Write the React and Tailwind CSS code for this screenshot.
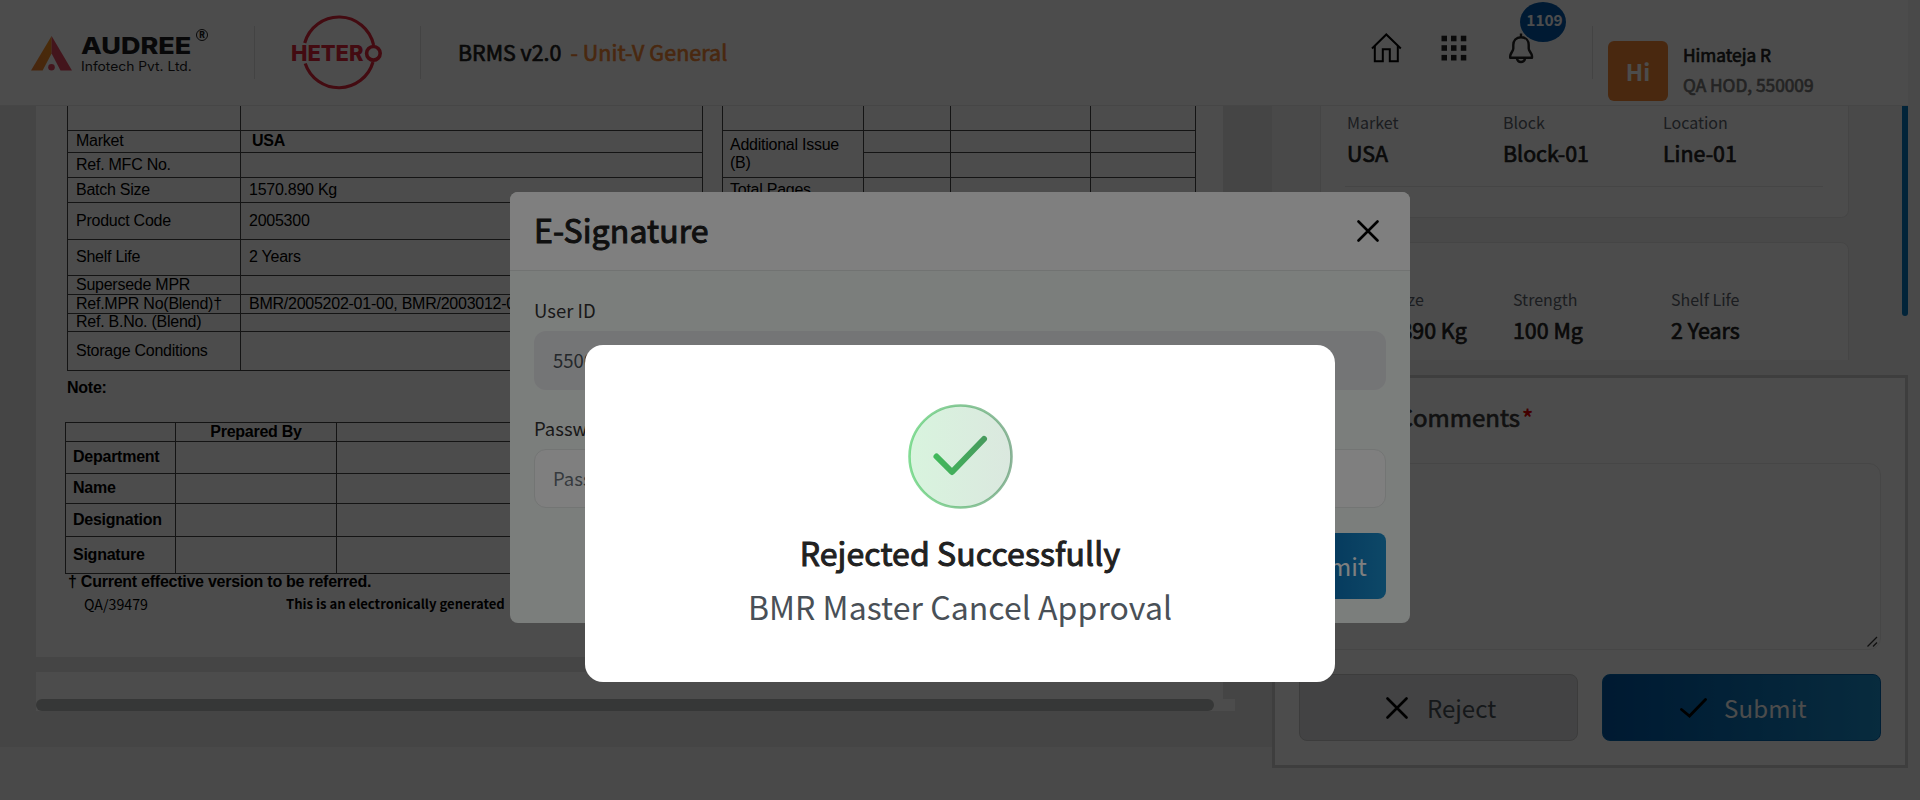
import React from "react";

const strong = "[-webkit-text-stroke:0.7px_currentColor]";

function AudreeLogo() {
  return (
    <div className="flex pt-9">
      <svg className="h-[35px] w-[41px]" viewBox="0 0 41 35">
        <defs>
          <linearGradient id="orange" x1="0" x2="1" y1="1" y2="0">
            <stop offset="0" stopColor="#ee7f33" />
            <stop offset="1" stopColor="#f7941d" />
          </linearGradient>
        </defs>
        <polygon points="20.6,0 20.6,17.5 11.6,34.6 0,34.6" fill="url(#orange)" />
        <polygon points="20.6,0 41,34.6 29.5,34.6 20.6,17.5" fill="#e2475e" />
        <circle cx="20.5" cy="31.2" r="3.3" fill="#e2475e" />
      </svg>
      <div className="flex w-[114px] flex-col pl-[9px] pt-[1px] font-['Inter',sans-serif] text-[#1d1d1f]">
        <div className="h-[18px] origin-left scale-x-[1.155] whitespace-nowrap text-[23.4px] font-extrabold leading-[18px]">AUDREE</div>
        <div className="mt-[3px] origin-left scale-x-[1.08] whitespace-nowrap text-[12.8px] leading-[18px]">Infotech Pvt. Ltd.</div>
      </div>
      <div className="-mt-[7px] ml-[10px] flex size-[12px] items-center justify-center rounded-full border-[1.5px] border-[#1d1d1f] font-['Inter',sans-serif] text-[8.5px] font-extrabold leading-none text-[#1d1d1f]">R</div>
    </div>
  );
}

function HeteroLogo() {
  return (
    <svg className="h-[78px] w-[92px]" viewBox="291 13 92 78">
      <g fill="none" stroke="#e0263a" strokeWidth="3.2">
        <path d="M304.7 43A35.5 35.5 0 0 1 373.6 45" />
        <path d="M305.2 63.5A35.5 35.5 0 0 0 373 62" />
        <circle cx="373.4" cy="53.3" r="6.8" strokeWidth="3.6" />
      </g>
      <text x="291" y="61" textLength="72.5" lengthAdjust="spacingAndGlyphs" fill="#e0263a" fontFamily="Inter, sans-serif" fontWeight="800" fontSize="21">HETER</text>
    </svg>
  );
}

function Header() {
  return (
    <header className="flex h-[106px] w-[1908px] shrink-0 border-b border-[#eaeaea] bg-white">
      <div className="w-[254px] pl-[31px]"><AudreeLogo /></div>
      <div className="mt-[26px] h-[53px] w-px bg-[#e2e2e2]" />
      <div className="w-[165px] pl-9 pt-[13px]"><HeteroLogo /></div>
      <div className="mt-[26px] h-[53px] w-px bg-[#e2e2e2]" />
      <div className="flex w-[950px] gap-[9px] pl-[37px] pt-[37px] text-[21.4px] leading-[30px]">
        <span className={`text-[#212121] ${strong}`}>BRMS v2.0</span>
        <span className={`tracking-[0.1px] text-[#f58634] ${strong}`}>- Unit-V General</span>
      </div>
      <svg className="mt-[33px] h-[30px] w-[31px]" viewBox="0 0 31 30" fill="none" stroke="#000" strokeWidth="2">
        <path d="M1 15.500L15.300 1.500L29.800 15.500" />
        <path d="M3.800 13V28.200H11.800V16.200H18.800V28.200H26.800V13" />
      </svg>
      <svg className="ml-[39px] mt-[35px] h-[27px] w-[27px]" viewBox="0 0 27 27" fill="#222">
        {[0.7, 10.2, 19.9].map((y) => [0.5, 10, 19.8].map((x) => <rect key={`${x}-${y}`} x={x} y={y} width="5.5" height="5.6" />))}
      </svg>
      <div className="relative ml-[41px] mt-[33px] h-[31px] w-[25px]">
        <svg className="h-[31px] w-[25px]" viewBox="0 0 25 31" fill="none" stroke="#222" strokeWidth="2.4" strokeLinejoin="round">
          <path d="M12 0.500V4.500M12 4.200C7 4.200 4.300 7.800 4.300 12V15.500C4.300 18 1.200 20.500 1.200 23V24.800H23V23C23 20.500 19.700 18 19.700 15.500V12C19.700 7.800 17 4.200 12 4.200Z" />
          <path d="M7.800 25C8.300 28 10 29 12 29C14 29 15.700 28 16.200 25" />
        </svg>
        <span className="absolute -top-[31px] left-[11px] flex h-[40px] w-[46px] items-center justify-center rounded-[50%] bg-[#0058ac] pb-[5px] pl-[3px] text-[15.4px] font-bold leading-none text-white">1109</span>
      </div>
      <div className="ml-[58px] mt-[26px] h-[53px] w-px bg-[#e2e2e2]" />
      <div className="ml-[15px] mt-[41px] flex h-[60px] w-[60px] items-center justify-center rounded-md bg-[#f58634] text-[23px] font-bold text-white">Hi</div>
      <div className="ml-[15px] flex flex-col pt-[42px] text-[17.3px] leading-[25px]">
        <span className={`text-[#222] ${strong}`}>Himateja R</span>
        <span className={`mt-[5px] text-[#777] ${strong}`}>QA HOD, 550009</span>
      </div>
    </header>
  );
}

const specs = [
  ["Market", "USA"],
  ["Ref. MFC No.", ""],
  ["Batch Size", "1570.890 Kg"],
  ["Product Code", "2005300"],
  ["Shelf Life", "2 Years"],
  ["Supersede MPR", ""],
  ["Ref.MPR No(Blend)†", "BMR/2005202-01-00, BMR/2003012-01"],
  ["Ref. B.No. (Blend)", ""],
  ["Storage Conditions", ""],
];

const cell = "flex items-center border-b border-r border-[#444] whitespace-nowrap pb-px";

function Document() {
  return (
    <div className="flex h-[551px] w-[1187px] shrink-0 flex-col overflow-hidden bg-white font-['Liberation_Sans',sans-serif] text-[16px] leading-[18px] tracking-[-0.25px] text-black">
      <div className="ml-[31px] flex h-[265px] shrink-0 gap-[19px]">
        <div className="grid w-[636px] grid-cols-[173px_1fr] grid-rows-[25px_22px_25px_25px_37px_36px_19px_19px_18px_39px] border-l border-[#444]">
          <div className={cell} />
          <div className={cell} />
          {specs.map(([label, value], i) => (
            <React.Fragment key={label}>
              <div className={`${cell} pl-2`}>{label}</div>
              <div className={`${cell} ${i === 0 ? "pl-[11px] font-bold" : "pl-2"}`}>{value}</div>
            </React.Fragment>
          ))}
        </div>
        <div className="grid h-[265px] w-[474px] grid-cols-[141px_87px_140px_1fr] grid-rows-[25px_22px_25px_25px] border-l border-[#444]">
          <div className={cell} /><div className={cell} /><div className={cell} /><div className={cell} />
          <div className={`${cell} row-span-2 !whitespace-normal pl-[7px]`}>Additional Issue (B)</div>
          <div className={cell} /><div className={cell} /><div className={cell} />
          <div className={cell} /><div className={cell} /><div className={cell} />
          <div className={`${cell} pl-[7px]`}>Total Pages</div>
          <div className={cell} /><div className={cell} /><div className={cell} />
        </div>
      </div>
      <div className="ml-[31px] mt-[8px] h-[43px] font-bold">Note:</div>
      <div className="ml-[29px] grid w-[1131px] shrink-0 grid-cols-[110px_161px_1fr] grid-rows-[19px_32px_30px_33px_37px] border-l border-t border-[#444] font-bold">
        <div className={cell} />
        <div className={`${cell} justify-center`}>Prepared By</div>
        <div className={cell} />
        {["Department", "Name", "Designation", "Signature"].map((r) => (
          <React.Fragment key={r}>
            <div className={`${cell} pl-[7px]`}>{r}</div>
            <div className={cell} />
            <div className={cell} />
          </React.Fragment>
        ))}
      </div>
      <div className="-mt-px ml-8 font-bold">† Current effective version to be referred.</div>
      <div className="mt-1 flex pl-12 font-['Noto_Sans_CJK_SC',sans-serif] tracking-normal">
        <span className="w-[202px] text-[14.2px]">QA/39479</span>
        <span className="text-[13.1px] font-bold">This is an electronically generated</span>
      </div>
    </div>
  );
}

function Fact({ label, value, className }) {
  return (
    <div className={`flex flex-col ${className}`}>
      <span className="text-[16px] leading-6 text-[#5b626b]">{label}</span>
      <span className={`mt-1 text-[21.4px] leading-[30px] text-[#222] ${strong}`}>{value}</span>
    </div>
  );
}

function CrossIcon() {
  return (
    <svg className="size-[22px]" viewBox="0 0 22 22" stroke="#000" strokeWidth="2.6" strokeLinecap="round"><path d="M1.500 1.500L20.500 20.500M20.500 1.500L1.500 20.500" /></svg>
  );
}

function SidePanel() {
  return (
    <aside className="flex w-[636px] flex-col">
      <div className="flex h-[269px] justify-between overflow-hidden">
        <div className="ml-12 flex h-[254px] w-[529px] flex-col overflow-hidden">
          <div className="h-[112px] shrink-0 rounded-b-lg border border-t-0 border-[#e8e8e8] bg-white pt-1">
            <div className="flex pl-[26px]">
              <Fact className="w-[156px]" label="Market" value="USA" />
              <Fact className="w-[160px]" label="Block" value="Block-01" />
              <Fact label="Location" value="Line-01" />
            </div>
            <div className="ml-6 mt-[18px] h-px w-[478px] bg-[#e6e6e6]" />
          </div>
          <div className="mt-6 h-[140px] shrink-0 rounded-t-lg border border-[#e8e8e8] bg-white pt-11">
            <div className="flex pl-[26px]">
              <Fact className="w-[166px]" label="Batch Size" value="1570.890 Kg" />
              <Fact className="w-[158px]" label="Strength" value="100 Mg" />
              <Fact label="Shelf Life" value="2 Years" />
            </div>
          </div>
        </div>
        <div className="h-[210px] w-[6px] rounded-b bg-[#0879c0]" />
      </div>
      <div className="flex h-[393px] flex-col border-[3px] border-[#cfcfcf] bg-white px-6 pt-6">
        <div className="flex text-[24px] leading-[30px] text-[#3a3a3a]">
          <span className={`w-[221px] whitespace-nowrap text-right ${strong}`}>Reject Comments</span>
          <span className="ml-[2px] -mt-px text-[22px] font-bold text-[#e00000]">*</span>
        </div>
        <div className="mt-[31px] flex h-[187px] items-end justify-end rounded-xl border border-[#e9e9e9] p-[2px]">
          <svg className="size-[11px]" viewBox="0 0 11 11" stroke="#333" strokeWidth="1.300"><path d="M0.500 10.500L10 1M6 10.500L10 6.500" /></svg>
        </div>
        <div className="mt-6 flex justify-between">
          <button className="flex h-[67px] w-[279px] items-center gap-[19px] rounded-lg border border-[#c9c9c9] bg-[#dfe0e4] pl-[86px] text-[24px] text-[#495057]"><CrossIcon />Reject</button>
          <button className="flex h-[67px] w-[279px] items-center gap-[17px] rounded-lg border border-[#0067b0] bg-gradient-to-r from-[#0057a6] to-[#1b90cf] pl-[77px] text-[24px] tracking-[0.2px] text-white">
            <svg className="h-[20px] w-[27px]" viewBox="0 0 27 20" fill="none" stroke="#000" strokeWidth="2.8" strokeLinecap="round"><path d="M1.500 11.500L9.500 18L25.500 1.500" /></svg>
            Submit
          </button>
        </div>
      </div>
    </aside>
  );
}

function SignatureDialog() {
  return (
    <div className="absolute inset-0 flex items-start justify-center bg-black/40 pt-48">
      <div className="flex h-[431px] w-[900px] flex-col overflow-hidden rounded-lg bg-[#f7fcf9]">
        <div className="flex h-[79px] items-center justify-between border-b border-[#e3e6e5] bg-white pl-[24px] pr-[31px]">
          <h2 className="-mt-1 text-[32px] leading-[44px] tracking-[0.1px] text-[#212121] [-webkit-text-stroke:1px_currentColor]">E-Signature</h2>
          <CrossIcon />
        </div>
        <div className="flex flex-col px-6 pt-[27px] text-[18.5px] leading-6 text-[#333]">
          <label>User ID</label>
          <div className="mt-[9px] flex h-[59px] items-center rounded-xl bg-[#e9eaed] pb-[2px] pl-[19px] text-[#495057]">550009</div>
          <label className="mt-[26px]">Password</label>
          <div className="mt-[9px] flex h-[59px] items-center rounded-xl border border-[#e6eae8] bg-white pb-[2px] pl-[18px] text-[#6c757d]">Password</div>
          <button className="mt-[25px] flex h-[66px] w-[120px] items-center justify-center self-end rounded-lg bg-gradient-to-r from-[#0057a6] to-[#1b90cf] pb-px text-[24px] text-white">Submit</button>
        </div>
      </div>
    </div>
  );
}

function SuccessAlert() {
  return (
    <div className="absolute inset-0 flex items-start justify-center bg-black/50 pt-[345px]">
      <div className="flex h-[337px] w-[750px] flex-col items-center rounded-[18px] bg-white pt-[59px]">
        <svg className="size-[105px]" viewBox="0 0 105 105" fill="none">
          <defs>
            <linearGradient id="ok" x1="0" x2="105" y1="0" y2="0" gradientUnits="userSpaceOnUse">
              <stop offset="0" stopColor="#3ec95a" />
              <stop offset="1" stopColor="#4a8a5e" />
            </linearGradient>
          </defs>
          <circle cx="52.5" cy="52.5" r="51" fill="url(#ok)" fillOpacity="0.200" stroke="url(#ok)" strokeOpacity="0.620" strokeWidth="2.600" />
          <path d="M28.500 52.500L44 68L76 35" stroke="url(#ok)" strokeWidth="6" strokeLinecap="round" strokeLinejoin="round" />
        </svg>
        <h2 className="mt-[23px] text-[32px] leading-10 tracking-[0.1px] text-[#212121] [-webkit-text-stroke:1px_currentColor]">Rejected Successfully</h2>
        <p className="mt-[14px] text-[32px] leading-10 tracking-[0.06px] text-[#495057]">BMR Master Cancel Approval</p>
      </div>
    </div>
  );
}

export default function App() {
  return (
    <div className="relative flex h-[800px] w-[1920px] flex-col overflow-hidden bg-[#f4f4f4] font-['Noto_Sans_CJK_SC',sans-serif]">
      <Header />
      <main className="flex">
        <section className="flex h-[641px] w-[1272px] shrink-0 flex-col bg-[#e6e6e6] pl-9">
          <Document />
          <div className="mt-[15px] h-[27px] w-[1187px] bg-white" />
          <div className="flex h-3 w-[1199px] bg-white">
            <div className="h-3 w-[1178px] rounded-full bg-[#b5b9b7]" />
          </div>
        </section>
        <SidePanel />
      </main>
      <SignatureDialog />
      <SuccessAlert />
    </div>
  );
}
